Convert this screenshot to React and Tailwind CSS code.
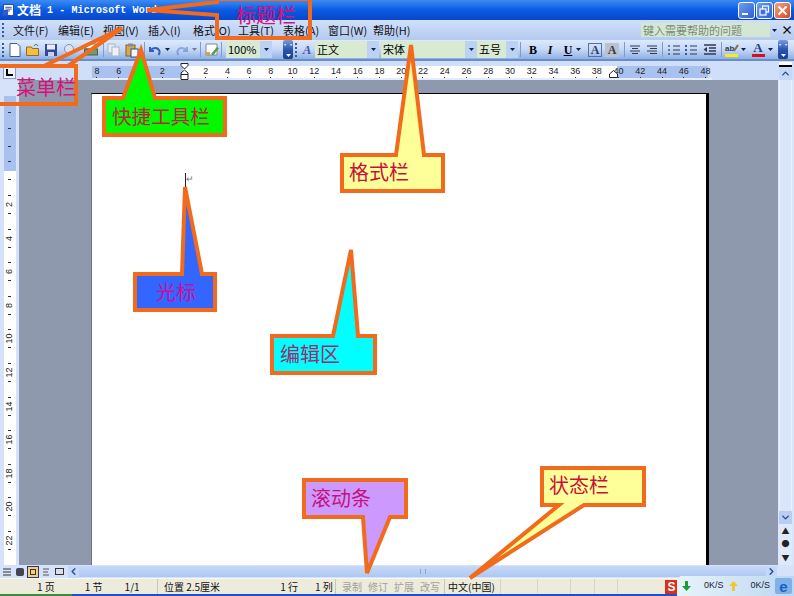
import { ChevronLeft, ChevronRight, ChevronUp, ChevronDown } from "lucide-react";

const MENUS = ["文件(F)", "编辑(E)", "视图(V)", "插入(I)", "格式(O)", "工具(T)", "表格(A)", "窗口(W)", "帮助(H)"];
const RULER = ["8", "6", "", "2", "", "2", "4", "6", "8", "10", "12", "14", "16", "18", "20", "22", "24", "26", "28", "30", "32", "34", "36", "38", "40", "42", "44", "46", "48"];
const V_RULER = ["", "", "", "2", "4", "6", "8", "10", "12", "14", "16", "18", "20", "22"];

const Grip = () => (
  <div className="flex flex-col gap-[2px] w-[3px] mx-[2px]">
    <i className="block w-[2px] h-[2px] bg-[#3a5a94]" />
    <i className="block w-[2px] h-[2px] bg-[#3a5a94]" />
    <i className="block w-[2px] h-[2px] bg-[#3a5a94]" />
    <i className="block w-[2px] h-[2px] bg-[#3a5a94]" />
  </div>
);

const Sep = ({ className = "" }) => <i className={`block w-px h-[15px] bg-[#7f9bc9] ${className}`} />;

const Caret = ({ className = "" }) => (
  <svg width="5" height="3" viewBox="0 0 5 3" className={`shrink-0 ${className}`}>
    <path d="M0 0h5L2.5 3z" fill="#10204a" />
  </svg>
);

const Ico = ({ children, className = "" }) => (
  <svg width="16" height="16" viewBox="0 0 16 16" className={`shrink-0 ${className}`}>
    {children}
  </svg>
);

// the dark blue "more buttons" chip at the end of each toolbar
const Overflow = ({ className = "" }) => (
  <div className={`w-[10px] h-[19px] rounded-[2px] bg-gradient-to-b from-[#7a9be0] via-[#2a55b0] to-[#173f95] flex flex-col items-center justify-between py-[2px] ${className}`}>
    <span className="text-white text-[6px] leading-[6px] font-bold">··</span>
    <Caret className="[&>path]:fill-white" />
  </div>
);

const Combo = ({ label, className = "" }) => (
  <div className={`h-[17px] flex items-center justify-between bg-[#d8ead2] pl-[2px] text-[11px] text-black ${className}`}>
    <span>{label}</span>
    <span className="w-[12px] h-full bg-[#bcd2f2] flex items-center justify-center">
      <Caret />
    </span>
  </div>
);

const TitleBar = () => (
  <div className="h-[20px] flex items-center bg-gradient-to-b from-[#3c8cf2] via-[#0a5ae6] to-[#0a46c8]">
    <Ico className="ml-[1px] scale-90">
      <rect x="2" y="2" width="11" height="12" fill="#fff" stroke="#26458f" />
      <path d="M4 5h7M4 7h7M4 9h5" stroke="#26458f" />
      <rect x="1" y="8" width="6" height="6" fill="#2a5bd0" />
    </Ico>
    <span className="text-white text-[12px] font-bold whitespace-pre">文档</span>
    <span className="text-white text-[10px] font-bold tracking-[0.1px] whitespace-pre font-['Liberation_Mono',monospace]">
      {" 1 - Microsoft Word"}
    </span>
    <div className="ml-auto mr-[3px] flex gap-[1px]">
      <span className="w-[17px] h-[17px] rounded-[3px] border border-white bg-gradient-to-br from-[#6f9cf0] to-[#2a5fd8] flex items-end pl-[3px] pb-[3px]">
        <i className="block w-[6px] h-[2px] bg-white" />
      </span>
      <span className="w-[17px] h-[17px] rounded-[3px] border border-white bg-gradient-to-br from-[#6f9cf0] to-[#2a5fd8] flex items-center justify-center">
        <svg width="11" height="11" viewBox="0 0 11 11" fill="none" stroke="#fff" strokeWidth="1.2">
          <rect x="3.5" y="1" width="6" height="6" />
          <rect x="1" y="4" width="6" height="6" fill="#3f70de" />
        </svg>
      </span>
      <span className="w-[17px] h-[17px] rounded-[3px] border border-white bg-gradient-to-br from-[#f0a080] to-[#d8431c] flex items-center justify-center">
        <svg width="11" height="11" viewBox="0 0 11 11" stroke="#fff" strokeWidth="2">
          <path d="M1.5 1.5l8 8M9.5 1.5l-8 8" />
        </svg>
      </span>
    </div>
  </div>
);

const MenuBar = () => (
  <div className="h-[20px] flex items-center bg-gradient-to-b from-[#cfe0fa] to-[#b4caf0] text-[11px] text-[#111]">
    <Grip />
    <div className="flex ml-[6px]">
      {MENUS.map((m) => (
        <span key={m} className="w-[45px] whitespace-nowrap">{m}</span>
      ))}
    </div>
    <div className="ml-[223px] w-[129px] shrink-0 h-[14px] bg-[#d3e8d2] text-[#7c8a7c] leading-[14px] pl-[2px]">键入需要帮助的问题</div>
    <Caret className="ml-[2px]" />
    <span className="ml-[4px] text-[12px] leading-none font-bold">×</span>
  </div>
);

const Toolbar = () => (
  <div className="h-[21px] flex items-center bg-gradient-to-b from-[#dce9fc] via-[#c4d8f7] to-[#8fb0e4] border-b-2 border-[#6c8cc4]">
    <Grip />
    <div className="flex items-center gap-[2px]">
      <Ico>
        <path d="M3 1.5h7l3 3v10H3z" fill="#fff" stroke="#4a5a78" />
      </Ico>
      <Ico>
        <path d="M1.5 5h5l1 1.5h6v7h-12z" fill="#f2c04a" stroke="#9a6a10" />
        <path d="M9 4c1-2 3-2 4 0" stroke="#2a6a30" fill="none" />
      </Ico>
      <Ico>
        <rect x="2" y="2" width="12" height="12" fill="#34489a" />
        <rect x="4" y="2.5" width="8" height="5" fill="#e8eefb" />
        <rect x="5" y="10" width="6" height="4" fill="#c8d4ea" />
      </Ico>
      <Ico>
        <circle cx="8" cy="7" r="4.5" fill="#d8e4f4" stroke="#8492a8" />
      </Ico>
      <Ico className="ml-[4px]">
        <rect x="3" y="2" width="10" height="5" fill="#fff" stroke="#6a7a90" />
        <rect x="1.5" y="7" width="13" height="6" fill="#6aa070" stroke="#43604a" />
      </Ico>
    </div>
    <Sep className="ml-[4px]" />
    <div className="flex items-center gap-[2px] ml-[2px]">
      <Ico>
        <rect x="2" y="2" width="7" height="9" fill="#e6ebf4" stroke="#a9b4c8" />
        <rect x="6" y="5" width="7" height="9" fill="#eef1f7" stroke="#a9b4c8" />
      </Ico>
      <Ico>
        <rect x="2" y="3" width="9" height="11" fill="#d8a94a" stroke="#80602a" />
        <rect x="4" y="1.5" width="5" height="3" fill="#889" />
        <rect x="7" y="7" width="7" height="8" fill="#f4f6fb" stroke="#3a4a80" />
      </Ico>
    </div>
    <Sep className="ml-[4px]" />
    <Ico className="ml-[2px]">
      <path d="M3 5v4h4M3.5 8.5C6 5 11 5 12.5 9c.5 1.4 0 2.7-1 4" fill="none" stroke="#2f5fb8" strokeWidth="2" />
    </Ico>
    <Caret className="ml-[2px]" />
    <Ico className="ml-[4px] opacity-40">
      <path d="M13 5v4H9M12.5 8.5C10 5 5 5 3.5 9c-.5 1.4 0 2.7 1 4" fill="none" stroke="#2f5fb8" strokeWidth="2" />
    </Ico>
    <Caret className="ml-[2px] opacity-50" />
    <Sep className="ml-[3px]" />
    <Ico className="ml-[3px]">
      <path d="M2 2h11v11H2z" fill="#fff" stroke="#7a8aa0" />
      <path d="M2 10h4v3H2z" fill="#e0a040" />
      <path d="M7 12l6-7 2 1.5-6 7z" fill="#5a9a50" />
    </Ico>
    <Sep className="ml-[1px]" />
    <Combo label="100%" className="ml-[4px] w-[46px]" />
    <Overflow className="ml-[11px]" />
    <Grip />
    <span className="w-[14px] text-center text-[13px] leading-none font-bold italic text-[#3e57a8] font-['Liberation_Serif',serif]">A</span>
    <Combo label="正文" className="ml-[1px] w-[64px]" />
    <Combo label="宋体" className="ml-[2px] w-[96px]" />
    <Combo label="五号" className="w-[41px]" />
    <Sep className="ml-[2px]" />
    <span className="ml-[6px] w-[12px] text-center text-[12px] font-bold font-['Liberation_Serif',serif]">B</span>
    <span className="ml-[5px] w-[12px] text-center text-[12px] font-bold italic font-['Liberation_Serif',serif]">I</span>
    <span className="ml-[6px] w-[12px] text-center text-[12px] font-bold underline font-['Liberation_Serif',serif]">U</span>
    <Caret className="ml-[2px]" />
    <span className="ml-[7px] w-[14px] h-[14px] border border-[#59719c] text-center text-[12px] leading-[13px] font-bold text-[#2f3f60] font-['Liberation_Serif',serif]">A</span>
    <span className="ml-[3px] w-[14px] h-[14px] bg-[#b8c2d2] text-center text-[12px] leading-[14px] font-bold text-[#3a3a3a] font-['Liberation_Serif',serif]">A</span>
    <Sep className="ml-[5px]" />
    <Ico className="ml-[2px]">
      <path d="M3 4h10M5 6.500h6M3 9h10M5 11.500h6" stroke="#303a50" strokeWidth="1.2" />
    </Ico>
    <Ico className="ml-[1px]">
      <path d="M3 4h10M6 6.500h7M3 9h10M6 11.500h7" stroke="#303a50" strokeWidth="1.2" />
    </Ico>
    <Sep className="ml-[2px]" />
    <Ico className="ml-[3px]">
      <path d="M7 4h7M7 8h7M7 12h7M3 3v2M3 7v2M3 11v2" stroke="#303a50" strokeWidth="1.2" />
    </Ico>
    <Ico className="ml-[1px]">
      <path d="M7 4h7M7 8h7M7 12h7" stroke="#303a50" strokeWidth="1.2" />
      <path d="M2 3h2v2H2zM2 7h2v2H2zM2 11h2v2H2z" fill="#3a5a94" />
    </Ico>
    <Ico className="ml-[3px]">
      <path d="M2 3h12M7 6h7M7 9h7M2 12h12" stroke="#303a50" strokeWidth="1.3" />
      <path d="M5 5v5L1.500 7.500z" fill="#303a50" />
    </Ico>
    <Sep className="ml-[3px]" />
    <Ico className="ml-[2px]">
      <text x="1" y="9" fontSize="8" fontWeight="700" fill="#303a50" fontFamily="Liberation Sans">ab</text>
      <path d="M10 9l4-6" stroke="#80704a" strokeWidth="2" />
      <rect x="1" y="12" width="13" height="3" fill="#f4ee20" />
    </Ico>
    <Caret className="ml-[1px]" />
    <div className="ml-[5px] w-[14px] flex flex-col items-center">
      <span className="text-[13px] leading-[12px] font-bold text-[#22418a] font-['Liberation_Serif',serif]">A</span>
      <i className="block w-[13px] h-[3px] bg-[#d8101c]" />
    </div>
    <Caret className="ml-[3px]" />
    <Overflow className="ml-[5px]" />
  </div>
);

const RulerRow = () => (
  <div className="h-[19px] flex bg-[#cfdff9] pt-[5px] relative">
    <div className="ml-[3px] w-[13px] h-[13px] bg-[#eef3fc] border border-[#8a9cc0] flex items-center justify-center">
      <i className="block w-[7px] h-[7px] border-l-2 border-b-2 border-black" />
    </div>
    <div className="ml-[76px] w-[620px] h-[14px] overflow-hidden flex bg-[linear-gradient(to_right,#a9c1ef_91px,#fff_91px,#fff_525px,#a9c1ef_525px,#a9c1ef_616px,#cfdff9_616px)] border-b-2 border-[#e4ecfb]">
      {RULER.map((n, i) => (
        <div key={i} className={`w-[21.74px] shrink-0 flex flex-col items-center ${i === 0 ? "-ml-[5.9px]" : ""}`}>
          <span className="text-[9px] leading-[11px] text-[#222] font-['Liberation_Sans',sans-serif]">{n}</span>
          <i className={`block w-px h-[2px] ${n ? "bg-[#333]" : ""}`} />
        </div>
      ))}
    </div>
    {/* indent markers on the ruler */}
    <svg width="9" height="17" viewBox="0 0 9 17" fill="#fff" stroke="#222" className="absolute left-[180px] top-[2px]">
      <path d="M1 .5h7v2L4.500 6 1 2.500zM4.500 7 8 10v1.500H1V10zM1 11.500h7v5H1z" />
    </svg>
    <svg width="9" height="8" viewBox="0 0 9 8" className="absolute left-[609px] top-[9px]" fill="#fff" stroke="#222">
      <path d="M.5 7.500V4L4.500.5l4 3.500v3.500z" />
    </svg>
    <div className="ml-[67px] w-[13px] -mt-[5px] flex flex-col">
      <i className="block h-[5px] mt-[1px] bg-white border-b-2 border-black" />
      <span className="mt-[1px] h-[14px] bg-[#c4d8f8] flex items-center justify-center">
        <ChevronUp size={11} strokeWidth={3} color="#2a4a90" />
      </span>
    </div>
  </div>
);

const VerticalRuler = () => (
  <div className="w-[19px] shrink-0 bg-[#d5e2f9] pt-[16px] flex flex-col items-center">
    <div className="w-[12px] flex-1 overflow-hidden bg-[linear-gradient(to_bottom,#a9c1ef_75px,#fff_75px)]">
      {V_RULER.map((n, i) => (
        <div key={i} className={`h-[33.6px] flex flex-col items-center justify-center gap-[4px] ${i === 0 ? "-mt-[9px]" : ""}`}>
          <i className="block w-[3px] h-px bg-[#333]" />
          <span className="h-[9px] -rotate-90 text-[9px] leading-[9px] text-[#222] whitespace-nowrap font-['Liberation_Sans',sans-serif]">{n}</span>
          <i className="block w-[3px] h-px bg-[#333]" />
        </div>
      ))}
    </div>
  </div>
);

const DocArea = () => (
  <div className="flex-1 bg-[#8f99ae] pt-[13px] pl-[72px] flex">
    <div className="w-[618px] bg-white border-t border-black border-r-[3px] border-l border-l-[#6a7284] pl-[93px] pt-[79px]">
      <div className="flex items-start">
        <i className="block w-px h-[19px] bg-[#222]" />
        <span className="text-[9px] leading-[12px] text-[#777]">↵</span>
      </div>
    </div>
  </div>
);

const RightScroll = () => (
  <div className="w-[16px] bg-[#d9e5fb] pl-px pr-[2px] flex flex-col">
    <div className="flex-1 border-x border-[#edf2fd]" />
    <span className="h-[13px] bg-[#b8cef5] flex items-center justify-center">
      <ChevronDown size={11} strokeWidth={3} color="#2a4a90" />
    </span>
    <div className="h-[41px] flex flex-col items-center justify-around bg-[#dfe9fb] text-[8px] leading-none text-[#222]">
      <span>▲</span>
      <span>●</span>
      <span>▼</span>
    </div>
  </div>
);

const HScroll = () => (
  <div className="h-[13px] flex items-center bg-[#d5e2f9]">
    <div className="flex items-center gap-[5px] pl-[3px] w-[68px]">
      <svg width="8" height="8" viewBox="0 0 8 8"><path d="M0 1h8M0 4h8M0 7h8" stroke="#333" /></svg>
      <svg width="8" height="8" viewBox="0 0 8 8"><rect width="8" height="8" rx="2" fill="#445" /></svg>
      <span className="w-[12px] h-[12px] -mx-[2px] bg-[#f6cd7c] border border-[#2a3a70] flex items-center justify-center">
        <i className="block w-[6px] h-[6px] border border-[#333]" />
      </span>
      <svg width="8" height="8" viewBox="0 0 8 8"><path d="M1 1h6M1 4h5M1 7h6" stroke="#555" /></svg>
      <svg width="9" height="8" viewBox="0 0 9 8"><rect x=".5" y=".5" width="8" height="6" fill="#dde" stroke="#333" /></svg>
    </div>
    <span className="w-[11px] h-[12px] bg-[#c4d8f8] flex items-center justify-center">
      <ChevronLeft size={11} strokeWidth={3} color="#2a4a90" />
    </span>
    <div className="w-[687px] h-[11px] bg-gradient-to-b from-[#c7d9f9] to-[#aec7f2] flex items-center justify-center">
      <i className="block w-[6px] h-[5px] border-x border-[#8ca6d4]" />
    </div>
    <span className="w-[11px] h-[12px] bg-[#c4d8f8] flex items-center justify-center">
      <ChevronRight size={11} strokeWidth={3} color="#2a4a90" />
    </span>
  </div>
);

const StatusBar = () => (
  <div className="h-[16px] flex items-center bg-[#ecebdc] border-t border-[#f8f8f2] text-[10px] leading-[15px] text-[#111] whitespace-pre">
    <div className="w-[157px] pl-[37px] flex">
      <span>1 页</span>
      <span className="ml-[30px]">1 节</span>
      <span className="ml-[22px]">1/1</span>
    </div>
    <div className="w-[178px] h-full pl-[6px] border-l border-[#c9c7b6] flex">
      <span>位置 2.5厘米</span>
      <span className="ml-[60px]">1 行</span>
      <span className="ml-[17px]">1 列</span>
    </div>
    <div className="w-[109px] h-full pl-[6px] border-l border-[#c9c7b6] flex gap-[6px] text-[#a3a294]">
      <span>录制</span>
      <span>修订</span>
      <span>扩展</span>
      <span>改写</span>
    </div>
    <div className="w-[56px] h-full pl-[3px] border-l border-[#c9c7b6]">中文(中国)</div>
    <div className="w-[37px] h-full border-l border-[#d6d4c4]" />
    <div className="w-[33px] h-full border-l border-[#d6d4c4]" />
    <div className="w-[24px] h-full border-l border-[#d6d4c4]" />
    <div className="w-[23px] h-full border-l border-[#d6d4c4]" />
    <div className="w-[48px] h-full border-l border-[#d6d4c4]" />
    <span className="w-[13px] h-[14px] bg-[#d8301c] text-white text-[12px] leading-[14px] text-center font-bold font-['Liberation_Sans',sans-serif]">S</span>
  </div>
);

// network speed widget sitting over the corner of the status bar
const TrayWidget = () => (
  <div className="absolute left-[677px] top-[576px] w-[117px] h-[20px] rounded-tl-[5px] bg-gradient-to-r from-[#e8f3fb] to-[#bcd7ef] flex items-center pl-[5px] text-[9px] text-[#223] font-['Liberation_Sans',sans-serif]">
    <svg width="9" height="10" viewBox="0 0 9 10" className="shrink-0">
      <path d="M3 0h3v5h3L4.500 10 0 5h3z" fill="#18a030" />
    </svg>
    <span className="ml-[13px]">0K/S</span>
    <svg width="9" height="10" viewBox="0 0 9 10" className="shrink-0 ml-[5px]">
      <path d="M3 10h3V5h3L4.500 0 0 5h3z" fill="#ecc838" />
    </svg>
    <span className="ml-[13px]">0K/S</span>
    <span className="ml-[5px] w-[17px] h-[16px] shrink-0 rounded-[2px] bg-[#7fb0e8] flex items-center justify-center text-[15px] leading-none font-bold text-[#1a5fc8]">e</span>
  </div>
);

const Callouts = () => (
  <>
    <svg width="794" height="596" className="absolute inset-0 pointer-events-none" stroke="#f26a1c" strokeWidth="4">
      <path d="M-3 66H76V104H-3" fill="none" />
      <path d="M44 66 122 28 68 66" fill="none" />
      <path d="M217 2 147 10 217 15V38H310V-1H217z" fill="none" />
      <path d="M104 98H123L141 50 155 98H225V135H104z" fill="#00f800" />
      <path d="M342 155H396L411 45 424 155H443V191H342z" fill="#ffff99" />
      <path d="M135 274H182L185 187 202 274H215V310H135z" fill="#3366ff" />
      <path d="M272 336H333L351 250 358 336H375V373H272z" fill="#00ffff" />
      <path d="M304 480H406V517H390L367 573 363 517H304z" fill="#cc99ff" />
      <path d="M542 468H644V505H584L470 578 559 505H542z" fill="#ffff99" />
    </svg>
    <span className="absolute left-[236px] top-[1px] text-[20px] leading-[28px] text-[#d8107c]">标题栏</span>
    <span className="absolute left-[16px] top-[73px] text-[20px] leading-[28px] text-[#d8107c]">菜单栏</span>
    <span className="absolute left-[112px] top-[102px] text-[19.6px] leading-[28px] text-[#b02c34]">快捷工具栏</span>
    <span className="absolute left-[349px] top-[158px] text-[20px] leading-[28px] text-[#c8103c]">格式栏</span>
    <span className="absolute left-[156px] top-[278px] text-[20px] leading-[28px] text-[#c8109c]">光标</span>
    <span className="absolute left-[280px] top-[340px] text-[20px] leading-[28px] text-[#9a2c70]">编辑区</span>
    <span className="absolute left-[311px] top-[484px] text-[20px] leading-[28px] text-[#c8107c]">滚动条</span>
    <span className="absolute left-[549px] top-[471px] text-[20px] leading-[28px] text-[#c8103c]">状态栏</span>
  </>
);

export default function App() {
  return (
    <div className="relative w-[794px] h-[596px] overflow-hidden flex flex-col bg-[#d5e2f9] font-['Noto_Sans_CJK_SC','Liberation_Sans',sans-serif]">
      <TitleBar />
      <MenuBar />
      <Toolbar />
      <RulerRow />
      <div className="flex-1 min-h-0 flex">
        <VerticalRuler />
        <DocArea />
        <RightScroll />
      </div>
      <HScroll />
      <StatusBar />
      <div className="h-[2px] flex">
        <i className="block w-[72px] bg-[#3c8c3c]" />
        <i className="block flex-1 bg-[#1c50c8]" />
      </div>
      <TrayWidget />
      <Callouts />
    </div>
  );
}
